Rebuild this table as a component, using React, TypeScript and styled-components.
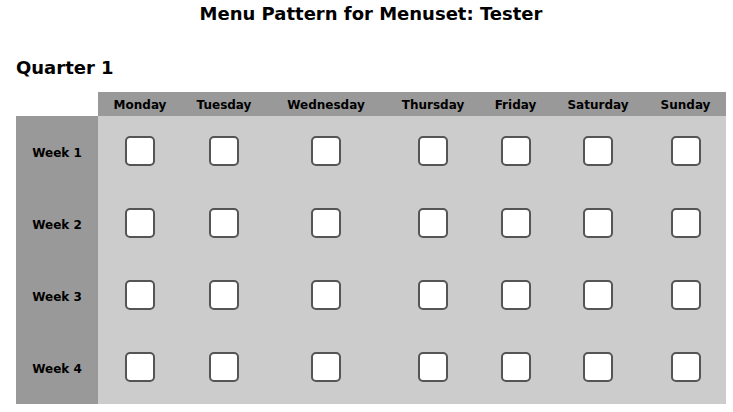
import styled, { createGlobalStyle } from 'styled-components'

const days = ['Monday', 'Tuesday', 'Wednesday', 'Thursday', 'Friday', 'Saturday', 'Sunday']
const weeks = ['Week 1', 'Week 2', 'Week 3', 'Week 4']

export default function App() {
    return (
        <>
            <GlobalStyle />
            <Page>
                <Title>Menu Pattern for Menuset: Tester</Title>
                <Quarter>Quarter 1</Quarter>
                <Pattern>
                    <Corner />
                    {days.map((day) => (
                        <DayHead key={day}>{day}</DayHead>
                    ))}
                    {weeks.map((week) => (
                        <Week key={week}>
                            <WeekHead>{week}</WeekHead>
                            {days.map((day) => (
                                <Cell key={day}>
                                    <Box type="checkbox" aria-label={`${week} ${day}`} />
                                </Cell>
                            ))}
                        </Week>
                    ))}
                </Pattern>
            </Page>
        </>
    )
}

const GlobalStyle = createGlobalStyle`
    body {
        margin: 0;
        background: #fff;
        font-family: "DejaVu Sans", Verdana, sans-serif;
        color: #000;
    }
`

const Page = styled.div`
    width: 733px;
    padding: 0 0 0 16px;
    box-sizing: border-box;
`

const Title = styled.h1`
    margin: 0;
    padding-top: 4px;
    padding-right: 7px;
    text-align: center;
    font-size: 18px;
    line-height: 20px;
    font-weight: bold;
`

const Quarter = styled.h2`
    margin: 34px 0 0;
    font-size: 18px;
    line-height: 20px;
    font-weight: bold;
`

const Pattern = styled.div`
    display: grid;
    grid-template-columns: 82px 84px 84px 120px 94px 71px 94px 81px;
    width: 710px;
    margin-top: 14px;
`

const Corner = styled.div`
    background: #fff;
`

const DayHead = styled.div`
    display: flex;
    align-items: center;
    justify-content: center;
    height: 24px;
    padding-top: 1px;
    box-sizing: border-box;
    background: #999;
    font-size: 12px;
    font-weight: bold;
    color: #000;
`

const Week = styled.div`
    display: contents;
`

const WeekHead = styled.div`
    display: flex;
    align-items: center;
    justify-content: center;
    height: 72px;
    padding-top: 2px;
    box-sizing: border-box;
    background: #999;
    font-size: 12px;
    font-weight: bold;
    color: #000;
`

const Cell = styled.div`
    display: flex;
    align-items: center;
    justify-content: center;
    background: #ccc;
`

const Box = styled.input`
    appearance: none;
    margin: 0 0 2px;
    width: 30px;
    height: 30px;
    box-sizing: border-box;
    border: 2px solid #555;
    border-radius: 5px;
    background: #fff;
`
